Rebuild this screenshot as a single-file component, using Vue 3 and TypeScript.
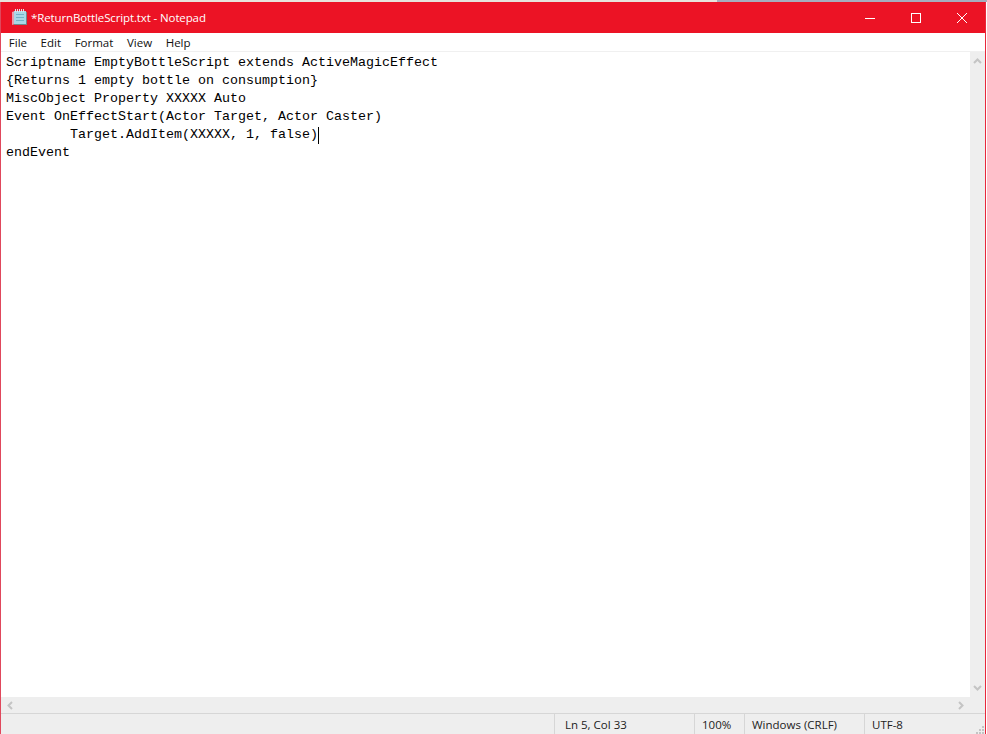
<script setup lang="ts">
const menus: string[] = ['File', 'Edit', 'Format', 'View', 'Help']
const lines: string[] = [
  'Scriptname EmptyBottleScript extends ActiveMagicEffect',
  '{Returns 1 empty bottle on consumption}',
  'MiscObject Property XXXXX Auto',
  'Event OnEffectStart(Actor Target, Actor Caster)',
  '\tTarget.AddItem(XXXXX, 1, false)',
  'endEvent',
]
</script>

<template>
  <div class="page">
    <div class="topstrip"></div>
    <div class="window">
      <header class="titlebar">
        <svg class="appicon" width="17" height="17" viewBox="0 0 17 17">
          <path d="M1 3 L4 2 V15 L1 16 Z" fill="#e8a0ac" />
          <rect x="3" y="3" width="13" height="13" fill="#6f8a8c" />
          <rect x="3" y="2" width="12" height="13" fill="#a9d8e6" />
          <rect x="5" y="5" width="8" height="1" fill="#74b4c8" />
          <rect x="5" y="8" width="8" height="1" fill="#74b4c8" />
          <rect x="5" y="11" width="8" height="1" fill="#74b4c8" />
          <path d="M4.5 0v3M6.5 0v3M8.5 0v3M10.5 0v3M12.5 0v3" stroke="#dfe8ea" stroke-width="1" />
        </svg>
        <span class="title">*ReturnBottleScript.txt - Notepad</span>
        <div class="controls">
          <button class="ctl">
            <svg width="10" height="10" viewBox="0 0 10 10"><path d="M0 5.5H10" stroke="#fff" /></svg>
          </button>
          <button class="ctl">
            <svg width="10" height="10" viewBox="0 0 10 10"><rect x=".5" y=".5" width="9" height="9" fill="none" stroke="#fff" /></svg>
          </button>
          <button class="ctl">
            <svg width="10" height="10" viewBox="0 0 10 10"><path d="M0 0L10 10M10 0L0 10" stroke="#fff" /></svg>
          </button>
        </div>
      </header>
      <nav class="menubar">
        <span v-for="m in menus" :key="m" class="menu">{{ m }}</span>
      </nav>
      <div class="editor-row">
        <div class="editor">
          <div v-for="(l, i) in lines" :key="i" class="line">{{ l }}<span v-if="i === 4" class="caret"></span></div>
        </div>
        <div class="vscroll">
          <svg width="9" height="6" viewBox="0 0 9 6"><path d="M1 5L4.5 1.5L8 5" fill="none" stroke="#c4c4c4" stroke-width="2" /></svg>
          <svg width="9" height="6" viewBox="0 0 9 6"><path d="M1 1L4.5 4.5L8 1" fill="none" stroke="#c4c4c4" stroke-width="2" /></svg>
        </div>
      </div>
      <div class="hscroll">
        <svg width="6" height="9" viewBox="0 0 6 9"><path d="M5 1L1.5 4.5L5 8" fill="none" stroke="#c4c4c4" stroke-width="2" /></svg>
        <svg width="6" height="9" viewBox="0 0 6 9"><path d="M1 1L4.5 4.5L1 8" fill="none" stroke="#c4c4c4" stroke-width="2" /></svg>
      </div>
      <footer class="status">
        <div class="cell grow"></div>
        <div class="cell c1">Ln 5, Col 33</div>
        <div class="cell c2">100%</div>
        <div class="cell c3">Windows (CRLF)</div>
        <div class="cell c4">UTF-8</div>
        <svg class="grip" width="8" height="8" viewBox="0 0 8 8">
          <path d="M6 0h2v2H6zM3 3h2v2H3zM6 3h2v2H6zM0 6h2v2H0zM3 6h2v2H3zM6 6h2v2H6z" fill="#c4c4c4" />
        </svg>
      </footer>
    </div>
  </div>
</template>

<style>
html, body { margin: 0; background: #fff; overflow: hidden; }
</style>

<style scoped>
.page { width: 987px; height: 734px; display: flex; flex-direction: column; font-family: "Open Sans", "Noto Sans", sans-serif; }
.topstrip { height: 2px; background: linear-gradient(to right, #e8e4dc 717px, #a5adbd 717px); }
.window { flex: 1; display: flex; flex-direction: column; min-height: 0; border-left: 1px solid #e0485c; border-right: 1px solid #e8283c; margin-right: 1px; }
.titlebar { height: 31px; background: #ec1325; color: #fff; display: flex; align-items: center; padding-left: 10px; }
.appicon { margin-right: 3px; flex: none; }
.title { font-size: 11.5px; letter-spacing: -0.12px; }
.controls { margin-left: auto; display: flex; }
.ctl { width: 46px; height: 31px; background: none; border: 0; padding: 0; display: flex; align-items: center; justify-content: center; }
.menubar { height: 18px; background: #fff; display: flex; align-items: center; padding-left: 1px; font-size: 11.5px; color: #111; }
.menu { padding: 0 6.8px; }
.editor-row { flex: 1; display: flex; min-height: 0; border-top: 1px solid #f0f0f0; }
.editor { flex: 1; padding: 2px 0 0 5px; font: 13.33px/18px "Liberation Mono", "DejaVu Sans Mono", monospace; color: #000; tab-size: 8; white-space: pre; }
.line { height: 18px; position: relative; }
.caret { display: inline-block; position: absolute; width: 1px; height: 17px; background: #000; margin-top: 1px; }
.vscroll { width: 15px; background: #eeeeee; display: flex; flex-direction: column; align-items: center; justify-content: space-between; padding: 6px 0; box-sizing: border-box; }
.hscroll { height: 16px; background: #eeeeee; display: flex; align-items: center; justify-content: space-between; padding: 0 21px 0 6px; box-sizing: border-box; }
.status { height: 21px; background: #eeeeee; border-top: 1px solid #d6d6d6; box-sizing: border-box; display: flex; font-size: 11.5px; color: #222; position: relative; }
.cell { border-left: 1px solid #d6d6d6; padding-left: 10px; box-sizing: border-box; line-height: 22px; }
.grow { flex: 1; border-left: 0; }
.c1 { width: 140px; }
.c2 { width: 50px; padding-left: 7px; }
.c3 { width: 120px; padding-left: 7px; }
.c4 { width: 121px; padding-left: 7px; }
.grip { position: absolute; right: 1px; bottom: 0; }
</style>
